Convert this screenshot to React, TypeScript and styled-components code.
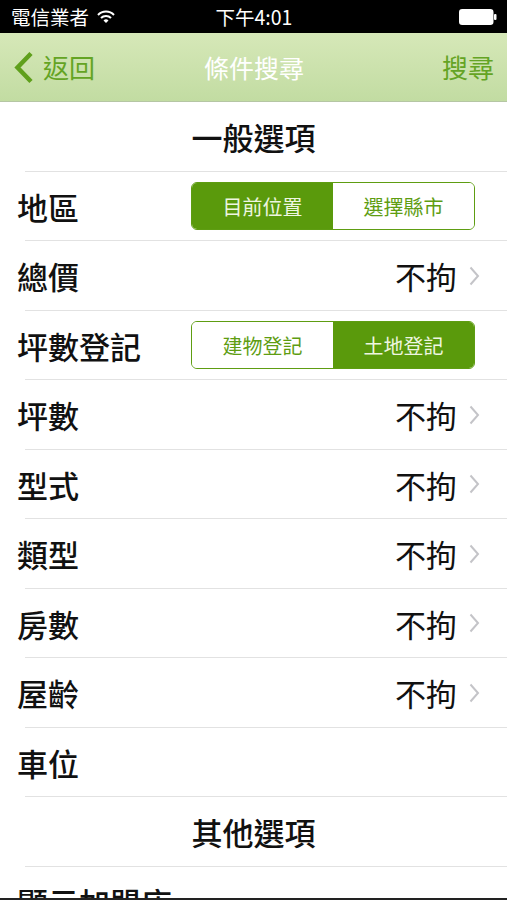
import React from "react";
import styled, { createGlobalStyle } from "styled-components";

const Global = createGlobalStyle`
  html, body { margin: 0; padding: 0; background: #fff; }
  body { font-family: "Noto Sans CJK TC", "Noto Sans", sans-serif; overflow: hidden; }
`;

const Screen = styled.div`
  width: 507px;
  height: 900px;
  display: flex;
  flex-direction: column;
  overflow: hidden;
  background: #fff;
`;

const StatusBar = styled.div`
  height: 33px;
  flex: none;
  background: #000;
  color: #fff;
  display: grid;
  grid-template-columns: 1fr auto 1fr;
  align-items: center;
  padding: 0 10px 0 11px;
  font-size: 19.5px;
  line-height: 1;
`;

const StatusLeft = styled.div`
  display: flex;
  align-items: center;
  gap: 8px;
`;

const StatusTime = styled.div`
  font-size: 19.5px;
`;

const StatusRight = styled.div`
  display: flex;
  justify-content: flex-end;
  align-items: center;
`;

const NavBar = styled.div`
  height: 68px;
  flex: none;
  background: linear-gradient(#d6e8b8, #c2dca2);
  border-bottom: 1px solid #b5c6a4;
  display: grid;
  grid-template-columns: 1fr auto 1fr;
  align-items: center;
  padding: 0 13px 0 14px;
`;

const NavButton = styled.div<{ $right?: boolean }>`
  display: flex;
  align-items: center;
  gap: 9px;
  justify-content: ${(p) => (p.$right ? "flex-end" : "flex-start")};
  color: #64a424;
  font-size: 26px;
  line-height: 1;
`;

const NavTitle = styled.div`
  color: #fff;
  font-size: 25px;
  line-height: 1;
`;

const List = styled.div`
  flex: 1;
  overflow: hidden;
`;

const Row = styled.div`
  height: 69.5px;
  box-sizing: border-box;
  display: flex;
  align-items: center;
  justify-content: space-between;
  padding: 0 27px 0 17px;
  position: relative;
  &::after {
    content: "";
    position: absolute;
    left: 25px;
    right: 0;
    bottom: 0;
    height: 1px;
    background: #e2e2e2;
  }
`;

const HeaderRow = styled(Row)`
  justify-content: center;
  padding: 0;
`;

const Label = styled.span`
  font-size: 31px;
  font-weight: 500;
  color: #111;
  line-height: 1;
`;

const Value = styled.span`
  display: flex;
  align-items: center;
  gap: 12px;
  font-size: 31px;
  color: #111;
  line-height: 1;
`;

const Segmented = styled.div`
  display: flex;
  width: 284px;
  height: 48px;
  box-sizing: border-box;
  border: 1.5px solid #5e9d12;
  border-radius: 6px;
  overflow: hidden;
  margin-right: 5px;
`;

const Segment = styled.div<{ $active?: boolean }>`
  flex: 1;
  display: flex;
  align-items: center;
  justify-content: center;
  font-size: 20px;
  background: ${(p) => (p.$active ? "#5a9a0c" : "#fff")};
  color: ${(p) => (p.$active ? "#eef6e0" : "#5e9d12")};
`;

const BottomEdge = styled.div`
  height: 2px;
  flex: none;
  background: #222;
`;

const Chevron = () => (
  <svg width="11" height="20" viewBox="0 0 11 20">
    <path d="M1.5 1.5 L9 10 L1.5 18.5" fill="none" stroke="#c4c4c8" strokeWidth="2" />
  </svg>
);

const Wifi = () => (
  <svg width="18" height="14" viewBox="0 0 18 14">
    <path d="M1 5 A11 11 0 0 1 17 5" fill="none" stroke="#fff" strokeWidth="2" />
    <path d="M4 8 A7 7 0 0 1 14 8" fill="none" stroke="#fff" strokeWidth="2" />
    <path d="M9 13 L6.5 10.5 A3.5 3.5 0 0 1 11.5 10.5 Z" fill="#fff" />
  </svg>
);

const Battery = () => (
  <svg width="38" height="16" viewBox="0 0 38 16">
    <rect x="0.75" y="0.75" width="33" height="14.5" rx="2.5" fill="#fff" stroke="#fff" strokeWidth="1.5" />
    <rect x="35" y="5" width="2.5" height="6" rx="1" fill="#fff" />
  </svg>
);

const BackArrow = () => (
  <svg width="20" height="33" viewBox="0 0 20 33">
    <path d="M17 2.5 L3.5 16.5 L17 30.5" fill="none" stroke="#5fa01c" strokeWidth="4.5" />
  </svg>
);

const pickerRows = ["坪數", "型式", "類型", "房數", "屋齡"];

export default function App() {
  return (
    <>
      <Global />
      <Screen>
        <StatusBar>
          <StatusLeft>
            <span>電信業者</span>
            <Wifi />
          </StatusLeft>
          <StatusTime>下午4:01</StatusTime>
          <StatusRight>
            <Battery />
          </StatusRight>
        </StatusBar>
        <NavBar>
          <NavButton>
            <BackArrow />
            <span>返回</span>
          </NavButton>
          <NavTitle>條件搜尋</NavTitle>
          <NavButton $right>搜尋</NavButton>
        </NavBar>
        <List>
          <HeaderRow>
            <Label>一般選項</Label>
          </HeaderRow>
          <Row>
            <Label>地區</Label>
            <Segmented>
              <Segment $active>目前位置</Segment>
              <Segment>選擇縣市</Segment>
            </Segmented>
          </Row>
          <Row>
            <Label>總價</Label>
            <Value>
              不拘
              <Chevron />
            </Value>
          </Row>
          <Row>
            <Label>坪數登記</Label>
            <Segmented>
              <Segment>建物登記</Segment>
              <Segment $active>土地登記</Segment>
            </Segmented>
          </Row>
          {pickerRows.map((r) => (
            <Row key={r}>
              <Label>{r}</Label>
              <Value>
                不拘
                <Chevron />
              </Value>
            </Row>
          ))}
          <Row>
            <Label>車位</Label>
          </Row>
          <HeaderRow>
            <Label>其他選項</Label>
          </HeaderRow>
          <Row>
            <Label>顯示加盟店</Label>
          </Row>
        </List>
        <BottomEdge />
      </Screen>
    </>
  );
}
